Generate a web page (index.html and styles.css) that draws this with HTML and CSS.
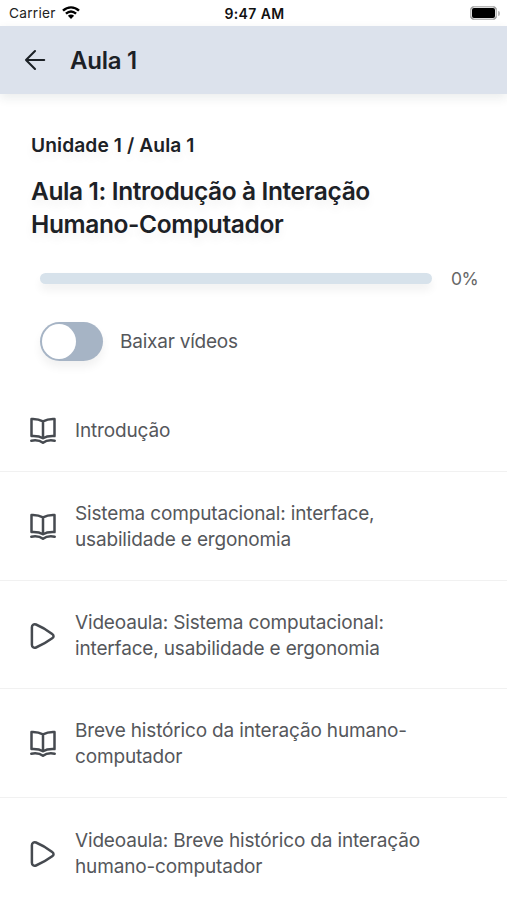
FILE: index.html
```
<!DOCTYPE html>
<html lang="pt-BR">
<head>
<meta charset="utf-8">
<title>Aula 1</title>
<link rel="stylesheet" href="styles.css">
</head>
<body>
<svg class="defs" aria-hidden="true">
  <symbol id="book" viewBox="0 0 28 28">
    <path d="M14 4.4C10.6 2.5 6 1.8 2.5 2V19.1C6 18.9 10.8 19.3 14 21.2C17.2 19.3 22 18.9 25.5 19.1V2C22 1.8 17.4 2.5 14 4.4ZM14 4.4V20.8M2.3 23.7C6.6 22.9 10.8 23.3 14 25.8C17.2 23.3 21.4 22.9 25.7 23.7"/>
  </symbol>
  <symbol id="play" viewBox="0 0 28 28">
    <path d="M2.9 5.2C2.9 3 4.8 1.6 7 2.5C13 5 18.4 8.3 23.2 12C25 13.3 25 15 23.2 16.2C18.4 19.7 13 22.9 7 25.5C4.8 26.4 2.9 25 2.9 22.8Z"/>
  </symbol>
</svg>
<div class="status">
  <div class="carrier">Carrier
    <svg class="wifi" viewBox="0 0 18 13"><path d="M1 4.7C5.7 .3 12.3 .3 17 4.7M3.9 7.7C7 5 11 5 14.1 7.7"/><path class="dot" d="M5.9 9.8C7.8 8.2 10.2 8.2 12.1 9.8L9 12.9Z"/></svg>
  </div>
  <div class="time">9:47 AM</div>
  <div class="power"><span class="battery"></span><span class="cap"></span></div>
</div>
<header class="topbar">
  <svg class="back" viewBox="0 0 22 22"><path d="M20.2 11H2M11 2L2 11L11 20"/></svg>
  <span class="bar-title">Aula 1</span>
</header>
<main>
  <section class="summary">
    <div class="crumb">Unidade 1 / Aula 1</div>
    <h1>Aula 1: Introdução à Interação<br>Humano-Computador</h1>
    <div class="progress"><div class="track"></div><span>0%</span></div>
    <div class="download"><div class="switch"><div class="knob"></div></div><span>Baixar vídeos</span></div>
  </section>
  <ul class="lessons">
    <li><svg class="icon"><use href="#book"/></svg><span>Introdução</span></li>
    <li><svg class="icon"><use href="#book"/></svg><span>Sistema computacional: interface,<br>usabilidade e ergonomia</span></li>
    <li><svg class="icon"><use href="#play"/></svg><span>Videoaula: Sistema computacional:<br>interface, usabilidade e ergonomia</span></li>
    <li><svg class="icon"><use href="#book"/></svg><span>Breve histórico da interação humano-<br>computador</span></li>
    <li><svg class="icon"><use href="#play"/></svg><span>Videoaula: Breve histórico da interação<br>humano-computador</span></li>
  </ul>
</main>
</body>
</html>
```
FILE: styles.css
```
* { box-sizing: border-box; }
body { margin: 0; height: 900px; overflow: hidden; background: #fff; color: #1c2126; font-family: Inter, "Liberation Sans", sans-serif; }
.defs { display: none; }
svg { fill: none; stroke: currentColor; stroke-linecap: round; stroke-linejoin: round; flex: none; }
.status { height: 26px; padding: 1px 7px 0 9px; display: grid; grid-template-columns: 1fr auto 1fr; align-items: center; color: #222; font-size: 13.7px; line-height: 25px; }
.carrier { display: flex; align-items: center; gap: 6px; letter-spacing: 0.25px; }
.wifi { width: 18px; height: 13px; color: #000; stroke-width: 2.4; stroke-linecap: butt; margin-top: -2px; }
.wifi .dot { fill: #000; stroke: none; }
.time { font-weight: 600; color: #111; font-size: 14px; letter-spacing: 0.4px; }
.power { display: flex; justify-content: flex-end; align-items: center; gap: 1px; margin-top: -1px; }
.battery { width: 27px; height: 14px; border: 1.5px solid #b9b9b9; border-radius: 4px; background: #000; box-shadow: inset 0 0 0 1px #ddd; }
.cap { width: 2px; height: 5px; background: #bbb; border-radius: 0 2px 2px 0; }
.topbar { height: 68px; padding: 0 24px; display: flex; align-items: center; gap: 24px; background: #dce2ec; box-shadow: 0 4px 10px rgba(30, 50, 50, .09); }
.back { width: 22px; height: 22px; stroke-width: 2.1; }
.bar-title { font-size: 24px; font-weight: 600; letter-spacing: -0.25px; }
.summary { height: 295.3px; padding: 38px 30px 0 31px; }
.crumb { font-size: 19.2px; line-height: 26px; font-weight: 600; letter-spacing: 0.1px; text-shadow: 0 6px 10px rgba(0, 0, 0, .06); }
h1 { margin: 17px 0 0; font-size: 24.5px; line-height: 33px; font-weight: 600; letter-spacing: -0.38px; text-shadow: 0 6px 10px rgba(0, 0, 0, .06); }
.progress { display: flex; align-items: center; gap: 19px; margin: 25px 0 0 9px; height: 24px; font-size: 17.5px; letter-spacing: -0.6px; color: #666; }
.track { flex: none; width: 392px; height: 11px; border-radius: 6px; background: #d7e2eb; box-shadow: 0 6px 10px rgba(0, 0, 0, .06); }
.download { display: flex; align-items: center; gap: 17px; margin: 32px 0 0 9px; font-size: 19px; letter-spacing: -0.22px; color: #55575b; }
.switch { width: 63px; height: 39px; padding: 2px; border-radius: 20px; background: #a6b4c5; box-shadow: 0 6px 10px rgba(0, 0, 0, .06); }
.knob { width: 34px; height: 35px; border-radius: 50%; background: #fff; }
.lessons { list-style: none; margin: 0; padding: 0; background: #fff; }
li { height: 108.8px; padding: 2px 29px 0; display: flex; align-items: center; gap: 18px; border-bottom: 1px solid #f1f1f1; font-size: 19px; line-height: 26px; letter-spacing: -0.16px; color: #55575b; }
li:first-child { height: 82.6px; }
li:last-child { border: 0; }
.icon { width: 28px; height: 28px; color: #464a50; stroke-width: 2.5; }
```
